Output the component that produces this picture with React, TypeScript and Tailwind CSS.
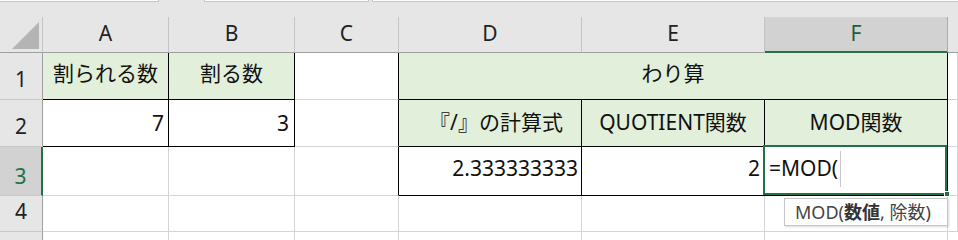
import React from "react";

const G = "border-r-[#d4d4d4]";
const GB = "border-b-[#d4d4d4]";
const K = "border-r-black";
const KB = "border-b-black";

function Cell({
  r = G,
  b = GB,
  cls = "",
  children,
}: {
  r?: string;
  b?: string;
  cls?: string;
  children?: React.ReactNode;
}) {
  return <div className={`border-r border-b ${r} ${b} ${cls}`}>{children}</div>;
}

function ColHead({ label, sel = false, last = false }: { label: string; sel?: boolean; last?: boolean }) {
  return (
    <div
      className={
        sel
          ? "flex items-end justify-center pb-[7px] bg-[#d2d2d2] border-r border-r-[#ababab] border-b-2 border-b-[#217346] text-[#1e5e3a]"
          : last
          ? "border-b border-b-[#9f9f9f]"
          : "flex items-end justify-center pb-[8px] border-r border-r-[#c4c4c4] border-b border-b-[#9f9f9f] text-[#222]"
      }
    >
      <span className="leading-[21px]">{label}</span>
    </div>
  );
}

function RowHead({ n, sel = false }: { n: string; sel?: boolean }) {
  return (
    <div
      className={
        sel
          ? "flex items-end justify-center pb-[8px] bg-[#d2d2d2] border-r-2 border-r-[#217346] border-b border-b-[#c8c8c8] text-[#217346]"
          : "flex items-end justify-center pb-[9px] bg-[#e6e6e6] border-r border-r-[#9f9f9f] border-b border-b-[#c8c8c8] text-[#222]"
      }
    >
      <span className="leading-[21px]">{n}</span>
    </div>
  );
}

export default function App() {
  return (
    <div className="relative w-[958px] h-[240px] overflow-hidden bg-[#e6e6e6] font-['Noto_Sans','Noto_Sans_CJK_JP',sans-serif] text-[21px] text-[#111]">
      {/* top strip */}
      <div className="flex h-[2px]">
        <div className="w-[159px] bg-white border-b border-r border-[#c6c6c6]" />
        <div className="w-[45px]" />
        <div className="w-[165px] bg-white border-b border-l border-r border-[#c6c6c6]" />
        <div className="w-[3px]" />
        <div className="flex-1 bg-white border-b border-l border-[#c6c6c6]" />
      </div>
      <div className="h-[15px]" />

      <div className="grid grid-cols-[43px_126px_126px_104px_183px_183px_183px_1fr] grid-rows-[36px_47px_47px_49px_36px_1fr] h-[223px]">
        {/* header row */}
        <div className="relative border-r border-r-[#c4c4c4] border-b border-b-[#9f9f9f]">
          <svg className="absolute right-[3px] bottom-[3px]" width="27" height="27" viewBox="0 0 27 27">
            <polygon points="27,0 27,27 0,27" fill="#b4b4b4" />
          </svg>
        </div>
        <ColHead label="A" />
        <ColHead label="B" />
        <ColHead label="C" />
        <ColHead label="D" />
        <ColHead label="E" />
        <ColHead label="F" sel />
        <ColHead label="" last />

        {/* row 1 */}
        <RowHead n="1" />
        <Cell r={K} b={KB} cls="bg-[#e2efda] flex items-end justify-center pb-[15px]">
          <span className="leading-[21px]">割られる数</span>
        </Cell>
        <Cell r={K} b={KB} cls="bg-[#e2efda] flex items-end justify-center pb-[15px]">
          <span className="leading-[21px]">割る数</span>
        </Cell>
        <Cell r={K} cls="bg-white" />
        <Cell r={K} b={KB} cls="col-span-3 bg-[#e2efda] flex items-end justify-center pb-[15px]">
          <span className="leading-[21px]">わり算</span>
        </Cell>
        <Cell cls="bg-white" />

        {/* row 2 */}
        <RowHead n="2" />
        <Cell r={K} b={KB} cls="bg-white flex items-end justify-end pr-[4px] pb-[12px]">
          <span className="leading-[21px]">7</span>
        </Cell>
        <Cell r={K} b={KB} cls="bg-white flex items-end justify-end pr-[5px] pb-[12px]">
          <span className="leading-[21px]">3</span>
        </Cell>
        <Cell r={K} cls="bg-white" />
        <Cell r={K} b={KB} cls="bg-[#e2efda] flex items-end justify-center pl-[12px] pb-[13px]">
          <span className="leading-[21px]">『/』の計算式</span>
        </Cell>
        <Cell r={K} b={KB} cls="bg-[#e2efda] flex items-end justify-center pb-[13px]">
          <span className="leading-[21px]">QUOTIENT関数</span>
        </Cell>
        <Cell r={K} b={KB} cls="bg-[#e2efda] flex items-end justify-center pb-[13px]">
          <span className="leading-[21px]">MOD関数</span>
        </Cell>
        <Cell cls="bg-white" />

        {/* row 3 */}
        <RowHead n="3" sel />
        <Cell cls="bg-white" />
        <Cell cls="bg-white" />
        <Cell r={K} cls="bg-white" />
        <Cell r={K} b={KB} cls="bg-white flex items-end justify-end pr-[3px] pb-[16px]">
          <span className="leading-[21px]">2.333333333</span>
        </Cell>
        <Cell r={K} b={KB} cls="bg-white flex items-end justify-end pr-[4px] pb-[16px]">
          <span className="leading-[21px]">2</span>
        </Cell>
        <Cell r={K} b={KB} cls="relative bg-white flex items-end justify-start pl-[4px] pb-[16px]">
          <span className="leading-[21px] text-[#111]">=MOD(</span>
          <span className="ml-[2px] mb-[-8px] inline-block w-px h-[36px] bg-[#c8c8c8]" />
          <div className="absolute -left-[2px] -top-[2px] right-0 bottom-0 border-2 border-[#217346]" />
          <div className="absolute -right-[3px] -bottom-[2px] w-[6px] h-[6px] bg-[#217346] border border-white" />
        </Cell>
        <Cell cls="bg-white" />

        {/* row 4 */}
        <RowHead n="4" />
        <Cell cls="bg-white" />
        <Cell cls="bg-white" />
        <Cell cls="bg-white" />
        <Cell cls="bg-white" />
        <Cell cls="bg-white" />
        <Cell cls="bg-white" />
        <Cell cls="bg-white" />

        {/* row 5 */}
        <div className="bg-[#e6e6e6] border-r border-r-[#9f9f9f]" />
        <div className="bg-white border-r border-r-[#d4d4d4]" />
        <div className="bg-white border-r border-r-[#d4d4d4]" />
        <div className="bg-white border-r border-r-[#d4d4d4]" />
        <div className="bg-white border-r border-r-[#d4d4d4]" />
        <div className="bg-white border-r border-r-[#d4d4d4]" />
        <div className="bg-white border-r border-r-[#d4d4d4]" />
        <div className="bg-white" />
      </div>

      {/* tooltip */}
      <div className="absolute left-[784px] top-[198px] w-[164px] h-[28px] bg-white border border-[#c6c6c6] shadow-[1px_1px_2px_rgba(0,0,0,0.15)] flex items-center pl-[10px] text-[18px] leading-[18px] text-[#444]">
        <span>
          MOD(<b className="font-bold text-[#333]">数値</b>, 除数)
        </span>
      </div>
    </div>
  );
}
